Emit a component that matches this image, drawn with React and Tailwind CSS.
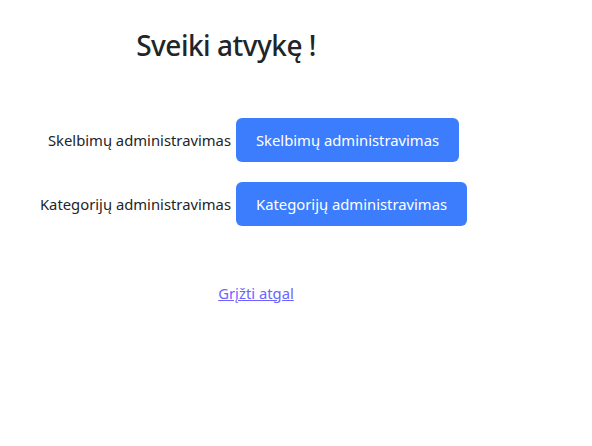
import React from 'react'

const rows = [
  {label: 'Skelbimų administravimas', button: 'Skelbimų administravimas'},
  {label: 'Kategorijų administravimas', button: 'Kategorijų administravimas'}
]

const App = () => {
  return (
    <div className="min-h-screen bg-white font-['Noto_Sans',sans-serif] text-[#212529]">
      <div className="w-[452px] pt-[29px] text-center">
        <h2 className="text-[28px] font-medium leading-[1.2] tracking-[-0.5px]">Sveiki atvykę !</h2>
      </div>
      <div className="mt-[55px] grid grid-cols-[231px_auto] gap-x-[5px] gap-y-[20px] items-center">
        {rows.map(row => (
          <React.Fragment key={row.label}>
            <span className="text-right text-[14.8px]">{row.label}</span>
            <div>
              <button className="rounded-[6px] bg-[#3c7dfd] px-[20px] py-[10px] text-[14.8px] leading-[24px] text-white">
                {row.button}
              </button>
            </div>
          </React.Fragment>
        ))}
      </div>
      <div className="mt-[55px] w-[512px] text-center">
        <a href="#" className="text-[14.8px] text-[#6c63ff] underline">
          Grįžti atgal
        </a>
      </div>
    </div>
  )
}

export default App
